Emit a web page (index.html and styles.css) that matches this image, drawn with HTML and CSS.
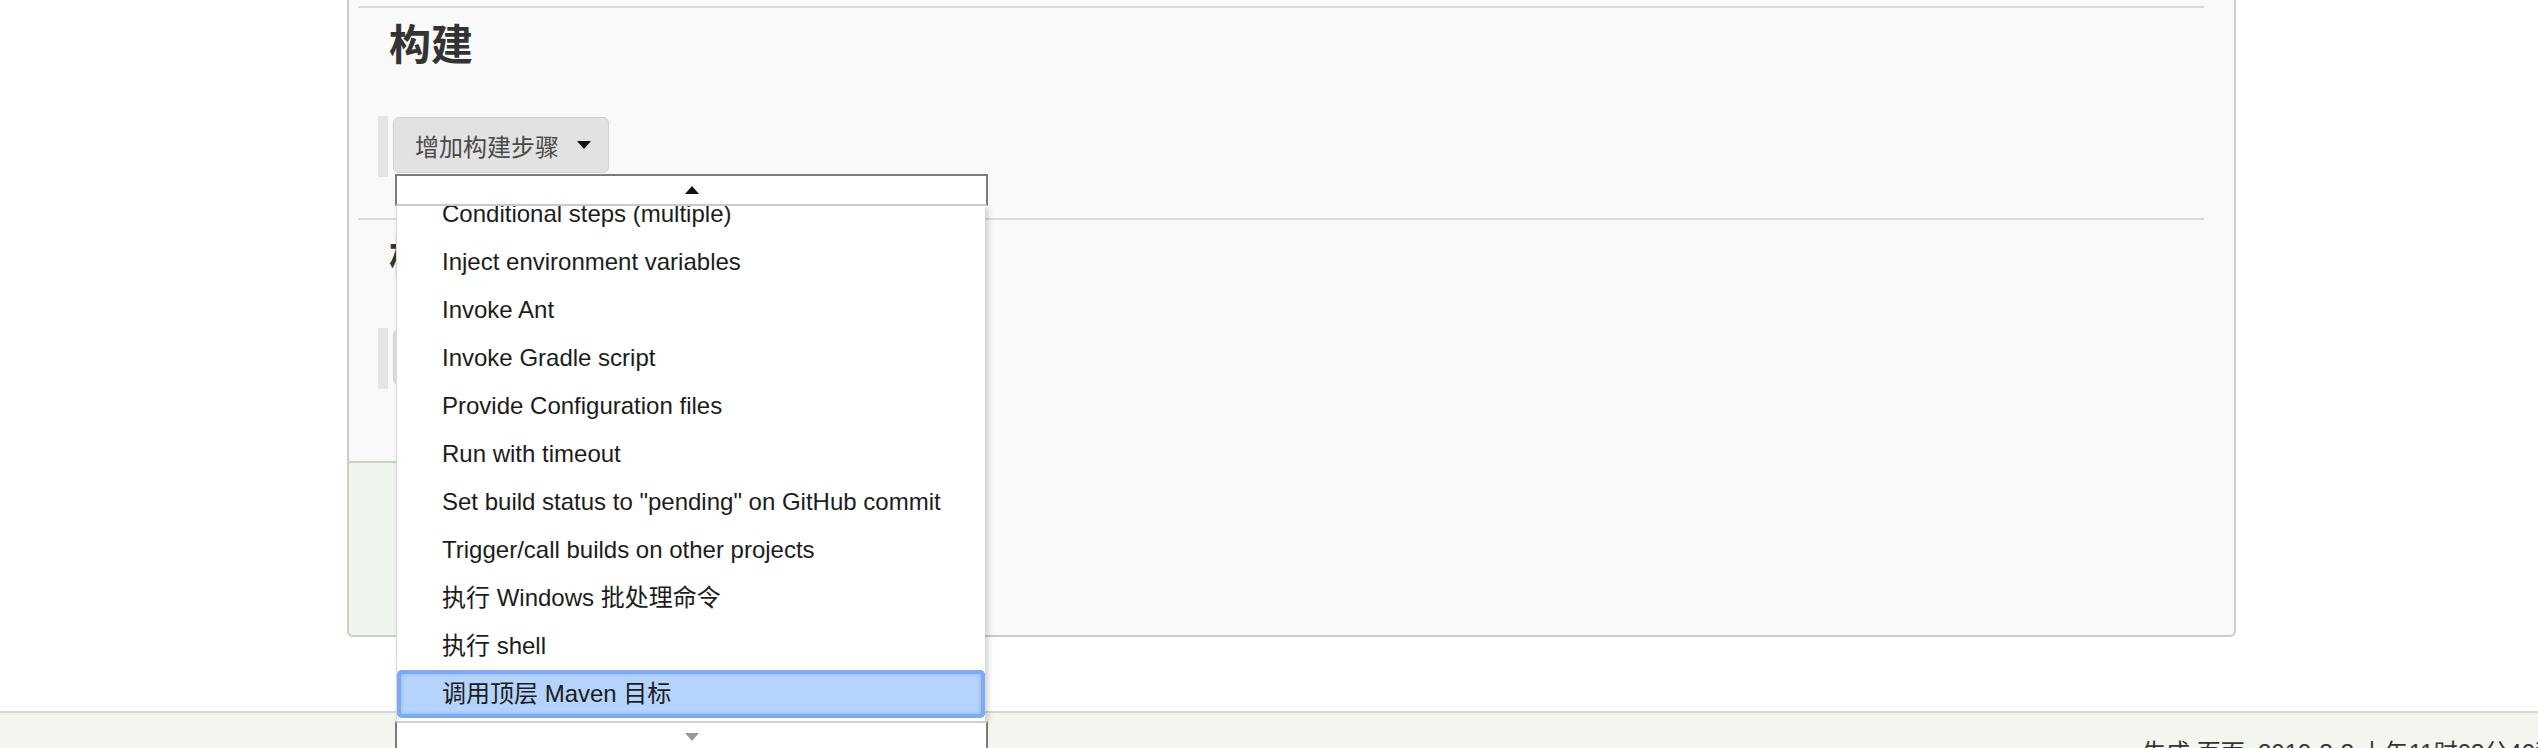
FILE: index.html
```html
<!DOCTYPE html>
<html lang="zh-CN">
<head>
    <meta charset="UTF-8">
    <meta name="viewport" content="width=device-width, initial-scale=1.0">
    <title>配置 [Jenkins]</title>
    <link rel="stylesheet" href="styles.css">
</head>
<body>

<div class="page">
    <div class="side-panel"></div>

    <div class="main-panel">
        <!-- 构建 -->
        <div class="section">
            <div class="section-header">构建</div>
            <div class="step-row">
                <span class="step-bar"></span>
                <div class="add-step">
                    <button class="add-btn">增加构建步骤 <span class="caret"></span></button>

                    <!-- 下拉菜单 -->
                    <div class="step-menu">
                        <div class="menu-scroll up"><span class="arrow-up"></span></div>
                        <ul class="menu-list">
                            <li>Conditional steps (multiple)</li>
                            <li>Inject environment variables</li>
                            <li>Invoke Ant</li>
                            <li>Invoke Gradle script</li>
                            <li>Provide Configuration files</li>
                            <li>Run with timeout</li>
                            <li>Set build status to "pending" on GitHub commit</li>
                            <li>Trigger/call builds on other projects</li>
                            <li>执行 Windows 批处理命令</li>
                            <li>执行 shell</li>
                            <li class="active">调用顶层 Maven 目标</li>
                        </ul>
                        <div class="menu-scroll down"><span class="arrow-down"></span></div>
                    </div>
                </div>
            </div>
        </div>

        <!-- 构建后操作 -->
        <div class="section second">
            <div class="section-header">构建后操作</div>
            <div class="step-row">
                <span class="step-bar"></span>
                <div class="add-step">
                    <button class="add-btn">增加构建后操作步骤 <span class="caret"></span></button>
                </div>
            </div>
        </div>

        <!-- 保存 / 应用 -->
        <div class="bottom-sticker">
            <button class="save-btn">保存</button>
            <button class="apply-btn">应用</button>
        </div>
    </div>
</div>

<footer>
    <div class="footer-text">生成 页面: 2019-3-3 上午11时03分40秒</div>
</footer>

</body>
</html>
```

FILE: styles.css
```css
/* Общие стили */
* {
    margin: 0;
    padding: 0;
    box-sizing: border-box;
}

html, body {
    overflow: hidden;
}

body {
    font-family: "Liberation Sans", "Noto Sans CJK SC", sans-serif;
    background: #fff;
    color: #333;
}

.page {
    display: flex;
}

.side-panel {
    width: 347px;
    flex-shrink: 0;
}

.main-panel {
    width: 1889px;
    background-color: #f9f9f9;
    border: 2px solid #cbcbcb;
    border-top: none;
    border-radius: 0 0 6px 6px;
    padding-top: 6px;
}

.section {
    margin: 0 30px 0 9px;
    border-top: 2px solid #dadada;
}

.section.second {
    margin-top: 41px;
}

.section-header {
    font-family: "Noto Sans CJK SC", sans-serif;
    font-size: 42px;
    line-height: 50px;
    font-weight: bold;
    color: #333;
    margin: 9px 0 49px 31px;
}

.step-row {
    display: flex;
    align-items: flex-start;
    padding-left: 20px;
}

.step-bar {
    width: 10px;
    height: 61px;
    background-color: #e4e4e4;
}

.add-step {
    position: relative;
    margin: 1px 0 0 5px;
}

.add-btn {
    display: flex;
    align-items: center;
    gap: 18px;
    height: 56px;
    padding: 0 17px 0 21px;
    background-color: #e2e2e2;
    border: 1px solid #d0d0d0;
    border-radius: 6px;
    font-family: "Noto Sans CJK SC", sans-serif;
    font-size: 24px;
    color: #4a4a4a;
    cursor: pointer;
}

.caret {
    width: 0;
    height: 0;
    border-left: 7px solid transparent;
    border-right: 7px solid transparent;
    border-top: 8px solid #111;
}

/* Выпадающее меню */
.step-menu {
    position: absolute;
    top: calc(100% + 1px);
    left: 2px;
    width: 593px;
    z-index: 10;
}

.menu-scroll {
    height: 32px;
    display: flex;
    justify-content: center;
    align-items: center;
    background-color: #fff;
    border-left: 2px solid #7b7b7b;
    border-right: 2px solid #7b7b7b;
}

.menu-scroll.up {
    border-top: 2px solid #7b7b7b;
    border-bottom: 2px solid #d0d0d0;
}

.menu-scroll.down {
    border-top: 2px solid #d0d0d0;
    align-items: flex-start;
    padding-top: 10px;
}

.arrow-up {
    width: 0;
    height: 0;
    border-left: 7px solid transparent;
    border-right: 7px solid transparent;
    border-bottom: 8px solid #111;
}

.arrow-down {
    width: 0;
    height: 0;
    border-left: 7px solid transparent;
    border-right: 7px solid transparent;
    border-top: 8px solid #999;
}

.menu-list {
    list-style: none;
    margin: 0 3px 0 1px;
    padding-bottom: 3px;
    background-color: #fff;
    border-left: 1px solid #d8d8d8;
    box-shadow: 3px 2px 6px rgba(0, 0, 0, 0.18);
    overflow: hidden;
}

.menu-list li {
    height: 48px;
    line-height: 48px;
    padding-left: 45px;
    font-size: 24px;
    color: #1c1c1c;
    white-space: nowrap;
}

.menu-list li:first-child {
    margin-top: -16px;
}

.menu-list li.active {
    background-color: #b5d4fc;
    border-radius: 5px;
    box-shadow: inset 0 0 0 4px #7daaf0, inset 0 0 3px 5px rgba(125, 170, 240, 0.5);
}

/* Нижняя панель с кнопками */
.bottom-sticker {
    width: 600px;
    height: 176px;
    margin: 72px 0 -2px -2px;
    padding: 40px 0 0 80px;
    background-color: #eff4ee;
    border: 2px solid #c3d3c4;
    border-radius: 0 0 0 6px;
    display: flex;
    gap: 16px;
    align-items: flex-start;
}

.bottom-sticker button {
    height: 48px;
    padding: 0 24px;
    font-family: "Noto Sans CJK SC", sans-serif;
    font-size: 24px;
    border-radius: 6px;
    border: 1px solid #bbb;
    background-color: #eee;
}

.bottom-sticker .save-btn {
    background-color: #4b758b;
    border-color: #3b6479;
    color: #fff;
}

footer {
    margin-top: 74px;
    height: 80px;
    background-color: #f3f5ef;
    border-top: 2px solid #d5d9cf;
    padding: 28px 0 0 2142px;
}

.footer-text {
    font-size: 24px;
    line-height: 24px;
    color: #333;
    white-space: nowrap;
}
```
